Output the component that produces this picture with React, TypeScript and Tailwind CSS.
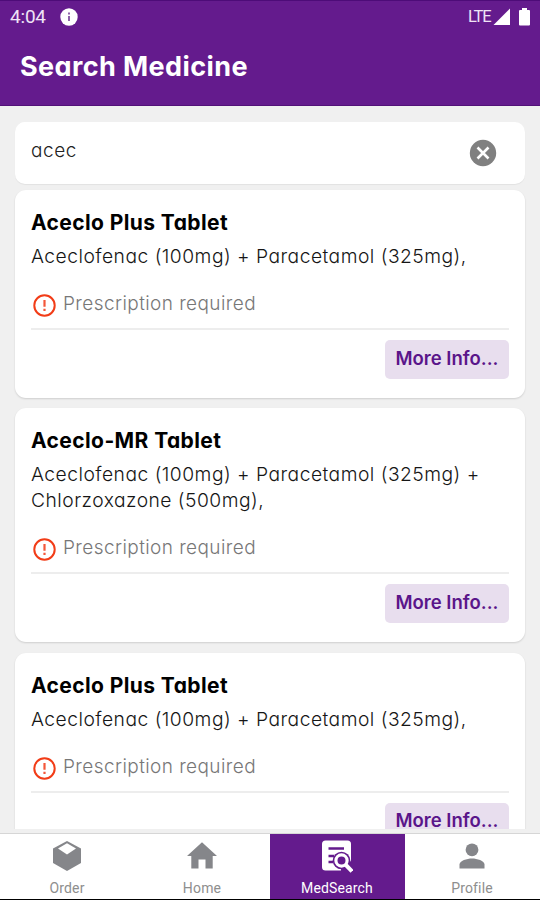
import React, { useState } from "react";

type TMedicine = {
  id: number;
  name: string;
  composition: string[];
};

const medicines: TMedicine[] = [
  {
    id: 1,
    name: "Aceclo Plus Tablet",
    composition: ["Aceclofenac (100mg) + Paracetamol (325mg),"],
  },
  {
    id: 2,
    name: "Aceclo-MR Tablet",
    composition: ["Aceclofenac (100mg) + Paracetamol (325mg) +", "Chlorzoxazone (500mg),"],
  },
  {
    id: 3,
    name: "Aceclo Plus Tablet",
    composition: ["Aceclofenac (100mg) + Paracetamol (325mg),"],
  },
];

const StatusBar = () => (
  <div className="flex h-8 items-center justify-between border-t border-[#4d0c78] px-[10px] font-[Roboto,sans-serif]">
    <div className="flex items-center gap-[13px]">
      <span className="w-[37px] text-[19px] leading-8 tracking-[-0.2px] text-[#efe4f6]">4:04</span>
      <svg width="18" height="18" viewBox="0 0 18 18">
        <circle cx="9" cy="9" r="8.7" fill="#fff" />
        <path d="M8 4.5h2v2H8zM8 8h2v5H8z" fill="#8d62aa" />
      </svg>
    </div>
    <div className="flex items-center">
      <span className="w-[25px] text-[16.5px] leading-8 tracking-[-1.1px] text-[#efe4f6]">LTE</span>
      <svg width="17" height="18" viewBox="0 0 17 18">
        <path d="M17 0.5V17H0.5z" fill="#fff" />
      </svg>
      <svg className="ml-[9px]" width="11" height="18" viewBox="0 0 11 18">
        <path d="M3 0h5v2h2a1 1 0 0 1 1 1v13.5a1 1 0 0 1-1 1H1a1 1 0 0 1-1-1V3a1 1 0 0 1 1-1h2z" fill="#fff" />
      </svg>
    </div>
  </div>
);

const MedicineCard = ({ medicine }: { medicine: TMedicine }) => (
  <div className="shrink-0 rounded-[11px] bg-white px-4 pt-[18px] pb-[19px] shadow-[0_1px_2px_rgba(0,0,0,0.14)]">
    <h2 className="text-[21px] leading-[30px] font-bold tracking-[0.4px] whitespace-nowrap text-black">{medicine.name}</h2>
    <div className="mt-[5px] text-[19.25px] leading-[26px] font-light tracking-[0.48px] whitespace-nowrap text-[#161616]">
      {medicine.composition.map((line) => (
        <p key={line}>{line}</p>
      ))}
    </div>
    <div className="mt-[22px] flex h-[26px] items-center gap-[7px] pl-[2px]">
      <svg className="mt-[3px]" width="23" height="23" viewBox="0 0 23 23" fill="none">
        <circle cx="11.5" cy="11.5" r="10.2" stroke="#f23c17" strokeWidth="2" />
        <path d="M11.5 6v6.8M11.5 14.8v2.2" stroke="#f4573a" strokeWidth="2.2" />
      </svg>
      <span className="text-[19px] leading-[26px] font-light tracking-[0.42px] whitespace-nowrap text-[#777]">Prescription required</span>
    </div>
    <div className="mt-[11px] h-[2px] bg-[#ededed]" />
    <div className="mt-[10px] flex justify-end">
      <button className="h-[39px] w-[124px] rounded-[5px] bg-[#e8deee] pb-[2px] text-[18.5px] font-semibold whitespace-nowrap text-[#5a158a]">
        More Info...
      </button>
    </div>
  </div>
);

const OrderIcon = () => (
  <svg width="30" height="32" viewBox="0 0 30 32">
    <path d="M15 1L29 8.5V23L15 31L1 23V8.5z" fill="#85868a" />
    <path d="M15 3.3L24 8.6L15 14.6L6 8.6z" fill="#fff" />
  </svg>
);

const HomeIcon = () => (
  <svg width="30" height="32" viewBox="0 0 30 32">
    <path d="M15 2.3L30 16H25.7V28.5H18.5V19.5H11.5V28.5H4.3V16H0z" fill="#85868a" />
  </svg>
);

const MedSearchIcon = () => (
  <svg width="32" height="34" viewBox="0 0 32 34">
    <rect x="1" y="1.5" width="29" height="30" rx="3.5" fill="#fff" />
    <path d="M7.5 9.5H23M7.5 17H13M7.5 23H12" stroke="#641b8d" strokeWidth="2.5" />
    <circle cx="20.5" cy="21.5" r="8.8" fill="#641b8d" />
    <path d="M24 25L32 33V22H30z" fill="#641b8d" />
    <path d="M20 28V34H32V23z" fill="#641b8d" />
    <circle cx="20.5" cy="21.5" r="5.6" fill="none" stroke="#fff" strokeWidth="3.2" />
    <path d="M24.4 25.5L31 32.3" stroke="#fff" strokeWidth="4" />
  </svg>
);

const ProfileIcon = () => (
  <svg width="26" height="32" viewBox="0 0 26 32">
    <circle cx="13" cy="9.8" r="6.4" fill="#85868a" />
    <path d="M0.5 28.5V24.5C0.5 20.5 8 18.4 13 18.4S25.5 20.5 25.5 24.5V28.5z" fill="#85868a" />
  </svg>
);

const tabs = [
  { label: "Order", icon: <OrderIcon /> },
  { label: "Home", icon: <HomeIcon /> },
  { label: "MedSearch", icon: <MedSearchIcon /> },
  { label: "Profile", icon: <ProfileIcon /> },
];

export default function App() {
  const [search, setSearch] = useState<string>("acec");
  const [activeTab, setActiveTab] = useState<string>("MedSearch");

  return (
    <div className="flex h-[900px] w-[540px] flex-col overflow-hidden bg-[#f0f0f0] font-[Inter,sans-serif] [font-feature-settings:'cv11']">
      <header className="h-[106px] shrink-0 border-b border-[#521178] bg-[#641b8d]">
        <StatusBar />
        <h1 className="pt-[15px] pl-5 text-[27px] leading-10 font-bold tracking-[0.4px] whitespace-nowrap text-white">Search Medicine</h1>
      </header>
      <main className="flex h-[723px] shrink-0 flex-col overflow-hidden px-[15px] pt-4">
        <div className="flex h-[62px] shrink-0 items-center justify-between rounded-[10px] bg-white pr-[28px] pl-4 shadow-[0_1px_1px_rgba(0,0,0,0.06)]">
          <input
            className="mb-[3px] w-[300px] text-[19px] font-light tracking-[0.6px] text-[#222] outline-none"
            value={search}
            onChange={(e) => setSearch(e.target.value)}
          />
          <button onClick={() => setSearch("")}>
            <svg width="28" height="28" viewBox="0 0 28 28">
              <circle cx="14" cy="14" r="13.2" fill="#808080" />
              <path d="M8.5 8.5l11 11M19.5 8.5L8.5 19.5" stroke="#fff" strokeWidth="2.6" />
            </svg>
          </button>
        </div>
        <div className="mt-[6px] flex flex-col gap-[10.4px]">
          {medicines.map((medicine) => (
            <MedicineCard key={medicine.id} medicine={medicine} />
          ))}
        </div>
      </main>
      <nav className="mt-[4px] grid h-[66px] shrink-0 grid-cols-4 border-t border-[#d6d6d6] bg-white font-[Roboto,sans-serif]">
        {tabs.map((tab) => (
          <button
            key={tab.label}
            onClick={() => setActiveTab(tab.label)}
            className={`flex flex-col items-center pt-[6px] pr-px text-[14px] tracking-[0.15px] ${
              activeTab === tab.label ? "bg-[#641b8d] text-white" : "text-[#8e8e8e]"
            }`}
          >
            <span className="flex h-8 items-center">{tab.icon}</span>
            <span className="mt-[8px] leading-4">{tab.label}</span>
          </button>
        ))}
      </nav>
      <div className="h-[2px] bg-black" />
    </div>
  );
}
